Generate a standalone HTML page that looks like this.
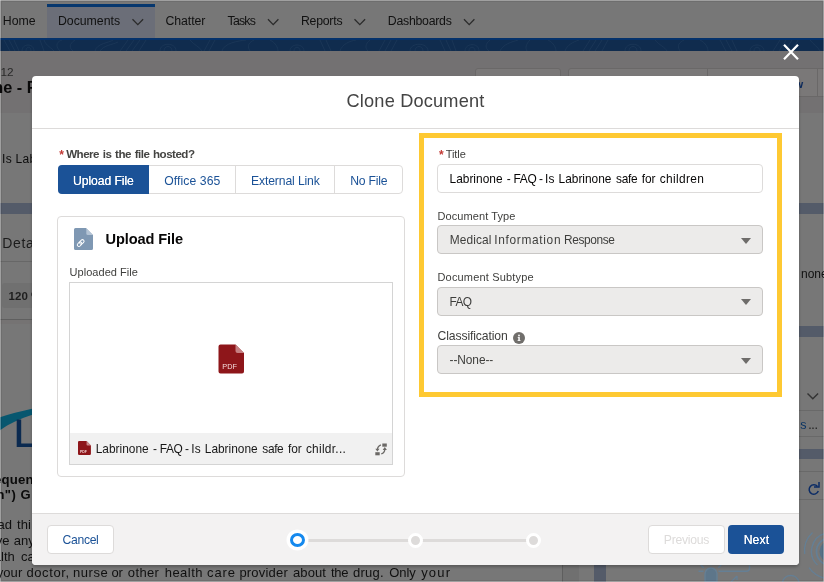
<!DOCTYPE html>
<html lang="en">
<head>
<meta charset="utf-8">
<title>Clone Document</title>
<style>
html,body{margin:0;padding:0;}
body{width:824px;height:582px;overflow:hidden;position:relative;background:#777777;font-family:"Liberation Sans",sans-serif;}
.a{position:absolute;box-sizing:border-box;}
.t{position:absolute;white-space:pre;font-family:"Liberation Sans",sans-serif;}
#bg,#content{will-change:transform;}
#bg{left:0;top:0;width:824px;height:582px;overflow:hidden;}
#modal{left:32px;top:76px;width:767px;height:489px;background:#fff;border-radius:4px;box-shadow:0 2px 3px rgba(0,0,0,.25);overflow:hidden;}
.sel{background:#ecebea;border:1px solid #c9c7c5;border-radius:4px;left:437px;width:326px;height:29px;}
.arr{width:0;height:0;border-left:5.500px solid transparent;border-right:5.500px solid transparent;border-top:6.500px solid #6e6c6a;left:741px;}
.btn{border:1px solid #dddbda;border-radius:4px;background:#fff;}
</style>
</head>
<body>
<!-- ================= dimmed page behind the modal ================= -->
<div id="bg" class="a">
  <!-- nav bar -->
  <div class="a" style="left:0;top:0;width:824px;height:38px;background:#777777;"></div>
    <div class="a" style="left:46.500px;top:4px;width:108px;height:34px;background:#6b6e78;border-top:3px solid #06376e;"></div>
  <!-- nav chevrons -->
  <svg class="a" style="left:0;top:0" width="824" height="38" viewBox="0 0 824 38" fill="none" stroke="#2b2b2b" stroke-width="1.3">
    <path d="M132.500 19.300l5.300 5.300 5.300-5.300"/><path d="M268 19.300l5.200 5.300 5.200-5.300"/><path d="M354.500 19.300l5.300 5.300 5.300-5.300"/><path d="M464 19.300l5.200 5.300 5.200-5.300"/>
  </svg>
  <!-- blue band -->
  <div class="a" style="left:0;top:37.500px;width:824px;height:13.500px;background:#102c4e;"></div>
  <div class="a" style="left:0;top:37.500px;width:824px;height:2.500px;background:#05326b;"></div>
  <svg class="a" style="left:0;top:40px" width="824" height="11" viewBox="0 0 824 11" fill="none" stroke="#2c4766" stroke-width="0.700" opacity="0.500">
    <path d="M4 0l6 11M9 0l6 11M14 0l5 11M22 11c0-8 12-8 12 0M26 11c0-5 5-5 5 0M40 0l4 11M44 0c2 6 8 8 10 11M60 11c-6-6-2-10 2-11M75 0c-6 4-6 8-2 11M95 11c2-8 14-8 18-11M100 11c4-6 12-6 18-9M128 0l-8 11M134 0l-8 11M140 0l-8 11M146 0l-7 11M160 11c0-9 16-9 16 0M164 11c0-6 8-6 8 0M190 0c4 5 10 7 12 11M210 0l-6 11M215 0l-6 11M222 11c2-8 16-10 24-11M250 11c-4-6 0-9 4-11M270 0c6 3 8 8 8 11M290 11c0-8 14-8 14 0M294 11c0-5 6-5 6 0M320 0l5 11M326 0l5 11M340 11c2-7 10-10 16-11M370 0c-5 4-5 8-2 11M385 0l-6 11M391 0l-6 11M397 0l-6 11M410 11c0-9 18-9 18 0M415 11c0-6 8-6 8 0M440 0l5 11M446 0l5 11M452 0l4 11M465 11c0-8 14-9 14 0M469 11c0-5 6-5 6 0M490 0c-5 4-5 8-1 11M500 11c3-7 12-9 18-11M530 0c-4 4-5 8-3 11M548 0c6 3 8 8 8 11M565 11c2-6 8-9 14-11M590 0l-7 11M596 0l-7 11M602 0l-7 11M608 0l-6 11M625 11c0-9 16-9 16 0M629 11c0-6 8-6 8 0M655 0c4 5 10 7 12 11M680 11c-4-6 0-9 4-11M700 0c6 3 8 8 8 11M720 0l6 11M726 0l6 11M732 0l5 11M750 11c0-8 14-8 14 0M754 11c0-5 6-5 6 0M780 0l-7 11M786 0l-7 11M792 0l-7 11M798 0l-6 11M810 0c3 4 8 7 10 11"/>
  </svg>
  <!-- record header -->
  <div class="a" style="left:0;top:51px;width:824px;height:62px;background:#737172;"></div>
  <div class="a" style="left:475px;top:68px;width:86px;height:29px;background:#7a7878;border:1px solid #6a6868;border-radius:3px;"></div>
  <div class="a" style="left:568px;top:68px;width:260px;height:29px;background:#7a7878;border:1px solid #6a6868;border-radius:3px;"></div>
  <div class="a" style="left:707px;top:68px;width:1px;height:29px;background:#6a6868;"></div>
  <div class="a" style="left:817px;top:68px;width:1px;height:29px;background:#6a6868;"></div>
  <!-- blue-gray separator bands -->
  <div class="a" style="left:0;top:203px;width:824px;height:11px;background:#545b69;"></div>
  <div class="a" style="left:799px;top:326px;width:25px;height:11px;background:#545b69;"></div>
  <div class="a" style="left:799px;top:449px;width:25px;height:10px;background:#545b69;"></div>
  <!-- left column details -->
  <div class="a" style="left:0;top:261px;width:40px;height:1px;background:#676767;"></div>
  <div class="a" style="left:1.500px;top:283px;width:40px;height:25px;background:#707070;border-radius:3px;"></div>
  <div class="a" style="left:0;top:319px;width:40px;height:1px;background:#5f5f5f;"></div>
  <div class="a" style="left:0;top:320px;width:40px;height:4px;background:#757373;"></div>
  <svg class="a" style="left:0;top:400px" width="40" height="60" viewBox="0 400 40 60" fill="none">
    <path d="M0 430.300C9 423.800 20 418.600 33 414.600V408.400C20 411.200 9 414.200 0 417.300Z" fill="#07576f"/>
    <path d="M16.700 419.500h4.500v24h12v3.400h-16.500z" fill="#0b2a50"/>
  </svg>
  <!-- right column details -->
  <div class="a" style="left:799px;top:410px;width:25px;height:1px;background:#696969;"></div>
  <div class="a" style="left:799px;top:436px;width:25px;height:1px;background:#696969;"></div>
  <div class="a" style="left:799px;top:471px;width:25px;height:1px;background:#696969;"></div>
  <div class="a" style="left:799px;top:499px;width:25px;height:1px;background:#696969;"></div>
  <svg class="a" style="left:799px;top:385px" width="25" height="120" viewBox="799 385 25 120" fill="none">
    <path d="M807.500 393.500l5.300 5.300 5.300-5.300" stroke="#333" stroke-width="1.400"/>
    <path d="M817.500 486.500a4.700 4.700 0 1 0 0.800 4.500" stroke="#0c2c66" stroke-width="1.500"/>
    <path d="M819 482v5h-5" stroke="#0c2c66" stroke-width="1.500"/>
  </svg>
  <!-- bottom strip -->
  <div class="a" style="left:562px;top:560px;width:17px;height:22px;background:#707070;border-left:1px solid #5e5e5e;"></div>
  <div class="a" style="left:593.500px;top:560px;width:12px;height:22px;background:#545b69;"></div>
  <svg class="a" style="left:640px;top:500px" width="184" height="82" viewBox="640 500 184 82" fill="none" stroke="#62819a" stroke-width="1.400" opacity="0.850">
    <circle cx="830" cy="551.500" r="10.500" fill="#50718a" stroke="none"/>
    <circle cx="830" cy="551.500" r="13.500" stroke-width="1.800"/>
    <path d="M826 533.300A18.500 18.500 0 0 0 817.500 565"/>
    <path d="M812.500 532.500A25.500 25.500 0 0 0 804.700 554" stroke-width="1.300"/>
    <path d="M809 567.600A27 27 0 0 0 824 578" stroke-width="1.300"/>
    <path d="M705 582v-8a6 6 0 0 1 12 0v8z" fill="#59768d"/>
    <path d="M700.500 564.500l3.200 3.200M721.500 564.500l-3.200 3.200M711 562v3.500"/>
    <path d="M698.500 571.300h5M718.500 571.300h28a3 3 0 0 0 3-3v-3"/>
    <path d="M731 582l6-6M737 576v4"/>
    <path d="M782.500 582a8.500 8.500 0 0 1 16.500 0"/>
  </svg>
  <!-- edge artefacts -->
  <div class="a" style="left:1px;top:1px;width:822px;height:580px;border:1px solid rgba(0,0,0,.07);"></div>
  <div class="a" style="left:0;top:0;width:1px;height:582px;background:rgba(255,255,255,.3);"></div>
  <div class="a" style="left:823px;top:0;width:1px;height:582px;background:rgba(255,255,255,.3);"></div>
  <div class="a" style="left:0;top:0;width:824px;height:1px;background:rgba(255,255,255,.3);"></div>
  <div class="a" style="left:0;top:581px;width:824px;height:1px;background:rgba(255,255,255,.3);"></div>
<span class="t" style="left:2.80px;top:14.00px;font-size:12.3px;line-height:15px;font-weight:400;color:#111111;">Home</span>
<span class="t" style="left:58.00px;top:14.00px;font-size:12.3px;line-height:15px;font-weight:400;color:#111111;letter-spacing:-0.021px;">Documents</span>
<span class="t" style="left:165.40px;top:14.00px;font-size:12.3px;line-height:15px;font-weight:400;color:#111111;letter-spacing:-0.046px;">Chatter</span>
<span class="t" style="left:227.50px;top:14.00px;font-size:12.3px;line-height:15px;font-weight:400;color:#111111;letter-spacing:-0.766px;">Tasks</span>
<span class="t" style="left:300.90px;top:14.00px;font-size:12.3px;line-height:15px;font-weight:400;color:#111111;letter-spacing:-0.237px;">Reports</span>
<span class="t" style="left:387.80px;top:14.00px;font-size:12.3px;line-height:15px;font-weight:400;color:#111111;letter-spacing:-0.251px;">Dashboards</span>
<span class="t" style="left:0.40px;top:65.00px;font-size:11.8px;line-height:14px;font-weight:400;color:#2a2a2a;">12</span>
<span class="t" style="left:-6.70px;top:77.00px;font-size:16.3px;line-height:20px;font-weight:700;color:#0a0a0a;">ne - F</span>
<span class="t" style="left:2.00px;top:152.00px;font-size:12px;line-height:14px;font-weight:400;color:#0c0c0c;letter-spacing:0.3px;">Is Lab</span>
<span class="t" style="left:2.20px;top:235.00px;font-size:14px;line-height:17px;font-weight:400;color:#1c1c1c;letter-spacing:0.7px;">Deta</span>
<span class="t" style="left:8.60px;top:289.00px;font-size:11.5px;line-height:14px;font-weight:700;color:#1e1e1e;">120 %</span>
<span class="t" style="left:-6.00px;top:471.50px;font-size:13.2px;line-height:16px;font-weight:700;color:#0a0a0a;letter-spacing:0.2px;">equen</span>
<span class="t" style="left:-3.60px;top:487.00px;font-size:13px;line-height:16px;font-weight:700;color:#0a0a0a;letter-spacing:0.5px;">n") G</span>
<span class="t" style="left:-2.60px;top:517.00px;font-size:13px;line-height:16px;font-weight:400;color:#101010;word-spacing:1.6px;">ad thi</span>
<span class="t" style="left:-4.20px;top:533.00px;font-size:13px;line-height:16px;font-weight:400;color:#101010;word-spacing:0.6px;">ve any</span>
<span class="t" style="left:-6.20px;top:549.00px;font-size:13px;line-height:16px;font-weight:400;color:#101010;word-spacing:2.7px;">alth ca</span>
<span class="t" style="left:-3.30px;top:564.50px;font-size:13px;line-height:16px;font-weight:400;color:#101010;letter-spacing:0.080px;">your </span>
<span class="t" style="left:26.50px;top:564.50px;font-size:13px;line-height:16px;font-weight:400;color:#101010;letter-spacing:0.581px;">doctor, </span>
<span class="t" style="left:73.10px;top:564.50px;font-size:13px;line-height:16px;font-weight:400;color:#101010;letter-spacing:0.528px;">nurse </span>
<span class="t" style="left:111.58px;top:564.50px;font-size:13px;line-height:16px;font-weight:400;color:#101010;letter-spacing:-0.390px;">or </span>
<span class="t" style="left:127.80px;top:564.50px;font-size:13px;line-height:16px;font-weight:400;color:#101010;letter-spacing:0.375px;">other </span>
<span class="t" style="left:164.70px;top:564.50px;font-size:13px;line-height:16px;font-weight:400;color:#101010;letter-spacing:0.482px;">health </span>
<span class="t" style="left:207.00px;top:564.50px;font-size:13px;line-height:16px;font-weight:400;color:#101010;letter-spacing:0.880px;">care </span>
<span class="t" style="left:239.40px;top:564.50px;font-size:13px;line-height:16px;font-weight:400;color:#101010;letter-spacing:0.195px;">provider </span>
<span class="t" style="left:293.10px;top:564.50px;font-size:13px;line-height:16px;font-weight:400;color:#101010;letter-spacing:0.045px;">about </span>
<span class="t" style="left:331.00px;top:564.50px;font-size:13px;line-height:16px;font-weight:400;color:#101010;letter-spacing:-0.271px;">the </span>
<span class="t" style="left:353.00px;top:564.50px;font-size:13px;line-height:16px;font-weight:400;color:#101010;letter-spacing:0.245px;">drug. </span>
<span class="t" style="left:389.30px;top:564.50px;font-size:13px;line-height:16px;font-weight:400;color:#101010;letter-spacing:-0.110px;">Only </span>
<span class="t" style="left:421.17px;top:564.50px;font-size:13px;line-height:16px;font-weight:400;color:#101010;letter-spacing:1.170px;">your</span>
<span class="t" style="left:801.00px;top:267.00px;font-size:12px;line-height:14px;font-weight:400;color:#111;">none</span>
<span class="t" style="left:800.30px;top:418.00px;font-size:12.5px;line-height:15px;font-weight:400;color:#0b3463;">s</span>
<span class="t" style="left:808.30px;top:418.00px;font-size:12.5px;line-height:15px;font-weight:400;color:#1c1c1c;letter-spacing:-0.4px;">...</span>
<span class="t" style="left:794.30px;top:77.00px;font-size:11.5px;line-height:14px;font-weight:700;color:#0c2a5c;">w</span>
</div>

<!-- close button -->
<svg class="a" style="left:780px;top:41px" width="22" height="22" viewBox="0 0 22 22" fill="none" stroke="#ffffff" stroke-width="2.200">
  <path d="M4 3.700l14 14.600M18 3.700l-14 14.600"/>
</svg>

<!-- ================= modal ================= -->
<div id="modal" class="a"></div>
<div id="content" class="a" style="left:0;top:0;width:824px;height:582px;">
  <!-- header / footer -->
  <div class="a" style="left:32px;top:128px;width:767px;height:1px;background:#dddbda;"></div>
  <div class="a" style="left:32px;top:513px;width:767px;height:52px;background:#f3f2f2;border-top:1px solid #dddbda;border-radius:0 0 4px 4px;"></div>

  <!-- radio button group -->
  <div class="a btn" style="left:58px;top:165px;width:345px;height:29px;"></div>
  <div class="a" style="left:58px;top:165px;width:91px;height:29px;background:#1b5297;border-radius:4px 0 0 4px;"></div>
  <div class="a" style="left:235px;top:165px;width:1px;height:29px;background:#dddbda;"></div>
  <div class="a" style="left:334px;top:165px;width:1px;height:29px;background:#dddbda;"></div>

  <!-- upload card -->
  <div class="a" style="left:57px;top:216px;width:348px;height:261px;border:1px solid #dddbda;border-radius:4px;background:#fff;"></div>
  <svg class="a" style="left:74px;top:228px" width="19" height="22" viewBox="0 0 19 22">
    <path d="M1.500 0H12l7 7v13.500A1.500 1.500 0 0 1 17.500 22h-16A1.500 1.500 0 0 1 0 20.500v-19A1.500 1.500 0 0 1 1.500 0z" fill="#7f98b3"/>
    <path d="M12.300 0.300l6.500 6.700h-5A1.500 1.500 0 0 1 12.300 5.500z" fill="#b4c4d5"/>
    <g transform="rotate(-45 6.700 15.100)" fill="none" stroke="#fff" stroke-width="1"><rect x="2.600" y="13.500" width="5" height="3.200" rx="1.600"/><rect x="5.800" y="13.500" width="5" height="3.200" rx="1.600"/></g>
  </svg>
  <div class="a" style="left:69px;top:282px;width:324px;height:183px;border:1px solid #d4d4d4;background:#fff;"></div>
  <div class="a" style="left:70px;top:433px;width:322px;height:31px;background:#f1f1f1;"></div>
  <!-- big pdf icon -->
  <svg class="a" style="left:218px;top:344px" width="26" height="30" viewBox="0 0 26 30">
    <path d="M2.500 0.500H17.500L26 9v18.500a2 2 0 0 1-2 2H2.500a2 2 0 0 1-2-2v-25a2 2 0 0 1 2-2z" fill="#8e161a"/>
    <path d="M17.500 0.500L26 9h-6.500a2 2 0 0 1-2-2z" fill="#c58082"/>
    <text x="4.300" y="25" font-family="Liberation Sans, sans-serif" font-size="7.300" fill="#f3dada">PDF</text>
  </svg>
  <!-- small pdf icon -->
  <svg class="a" style="left:78px;top:441px" width="13.300" height="14" viewBox="0 0 14 14" preserveAspectRatio="none">
    <path d="M1.200 0H9l4.600 4.600V12.800A1.200 1.200 0 0 1 12.400 14H1.200A1.200 1.200 0 0 1 0 12.800V1.200A1.200 1.200 0 0 1 1.200 0z" fill="#8e161a"/>
    <path d="M9 0l4.600 4.600H10A1 1 0 0 1 9 3.600z" fill="#c98a8c"/>
    <text x="2.200" y="11.600" font-family="Liberation Sans, sans-serif" font-size="3.600" font-weight="700" fill="#f0d0d0">PDF</text>
  </svg>
  <!-- replace icon -->
  <svg class="a" style="left:374px;top:443px" width="14" height="13" viewBox="0 0 14 13" fill="none" stroke="#6b6966" stroke-width="1.300">
    <path d="M6.900 1.800C4.600 2.700 3.400 4.600 3.400 6.800"/>
    <path d="M7.300 10.900C9.600 10 10.800 8.100 10.800 5.900"/>
    <rect x="8.300" y="0.500" width="4.500" height="3.200" fill="#6b6966" stroke="none"/>
    <rect x="1.300" y="9.200" width="4.400" height="3.100" fill="#6b6966" stroke="none"/>
    <path d="M1.300 5.700h4.200l-2.100 2.900z" fill="#6b6966" stroke="none"/>
    <path d="M8.700 7h4.200l-2.100-2.900z" fill="#6b6966" stroke="none"/>
  </svg>

  <!-- yellow highlight -->
  <div class="a" style="left:419px;top:133px;width:363px;height:264px;border:5px solid #fec932;"></div>
  <!-- title input -->
  <div class="a" style="left:437px;top:164px;width:326px;height:29px;border:1px solid #dddbda;border-radius:4px;background:#fff;"></div>
  <!-- selects -->
  <div class="a sel" style="top:225px;"></div><div class="a arr" style="top:238px;"></div>
  <div class="a sel" style="top:287px;"></div><div class="a arr" style="top:299px;"></div>
  <div class="a sel" style="top:345px;"></div><div class="a arr" style="top:358px;"></div>
  <!-- info icon -->
  <svg class="a" style="left:513px;top:332px" width="12" height="12" viewBox="0 0 12 12">
    <circle cx="6" cy="6" r="6" fill="#706e6b"/>
    <rect x="5.300" y="5.100" width="1.500" height="3.600" fill="#fff"/><rect x="4.700" y="5.100" width="1.400" height="0.800" fill="#fff"/><rect x="4.600" y="8.100" width="2.900" height="0.800" fill="#fff"/>
    <circle cx="6" cy="3.500" r="0.900" fill="#fff"/>
  </svg>

  <!-- footer buttons -->
  <div class="a btn" style="left:47px;top:525px;width:67px;height:29px;"></div>
  <div class="a btn" style="left:648px;top:525px;width:77px;height:29px;"></div>
  <div class="a" style="left:728px;top:525px;width:56px;height:29px;background:#1b5297;border-radius:4px;"></div>

  <!-- progress indicator -->
  <div class="a" style="left:297px;top:539px;width:237px;height:3px;background:#dddbda;"></div>
  <div class="a" style="left:290px;top:533px;width:15px;height:14px;border-radius:50%;background:#fff;border:3px solid #1589ee;box-shadow:0 0 0 3.500px #fff;"></div>
  <div class="a" style="left:408px;top:532.500px;width:15px;height:15px;border-radius:50%;background:#dddbda;border:3px solid #fff;"></div>
  <div class="a" style="left:526px;top:532.500px;width:15px;height:15px;border-radius:50%;background:#dddbda;border:3px solid #fff;"></div>

<span class="t" style="left:346.50px;top:90.20px;font-size:18.2px;line-height:22px;font-weight:400;color:#444444;letter-spacing:0.181px;">Clone Document</span>
<span class="t" style="left:59.30px;top:148.30px;font-size:12px;line-height:14px;font-weight:700;color:#c23934;">*</span>
<span class="t" style="left:66.20px;top:147.00px;font-size:11.6px;line-height:14px;font-weight:700;color:#444442;letter-spacing:-0.516px;word-spacing:1px;">Where is the file hosted?</span>
<span class="t" style="left:73.00px;top:174.00px;font-size:12.2px;line-height:15px;font-weight:400;color:#ffffff;letter-spacing:-0.086px;text-shadow:0 0 0.4px #fff;">Upload File</span>
<span class="t" style="left:164.20px;top:174.00px;font-size:12.2px;line-height:15px;font-weight:400;color:#1b5297;letter-spacing:0.097px;">Office 365</span>
<span class="t" style="left:251.00px;top:174.00px;font-size:12.2px;line-height:15px;font-weight:400;color:#1b5297;letter-spacing:-0.135px;">External Link</span>
<span class="t" style="left:350.20px;top:174.00px;font-size:12.2px;line-height:15px;font-weight:400;color:#1b5297;letter-spacing:-0.229px;">No File</span>
<span class="t" style="left:105.50px;top:229.70px;font-size:14.6px;line-height:18px;font-weight:700;color:#080707;letter-spacing:-0.104px;">Upload File</span>
<span class="t" style="left:69.50px;top:266.20px;font-size:11px;line-height:13px;font-weight:400;color:#3e3e3c;letter-spacing:0.048px;">Uploaded File</span>
<span class="t" style="left:95.70px;top:442.00px;font-size:11.9px;line-height:14px;font-weight:400;color:#181818;letter-spacing:0.015px;">Labrinone </span>
<span class="t" style="left:153.00px;top:442.00px;font-size:11.9px;line-height:14px;font-weight:400;color:#181818;letter-spacing:0.300px;">- </span>
<span class="t" style="left:159.79px;top:442.00px;font-size:11.9px;line-height:14px;font-weight:400;color:#181818;letter-spacing:-0.357px;">FAQ </span>
<span class="t" style="left:185.10px;top:442.00px;font-size:11.9px;line-height:14px;font-weight:400;color:#181818;letter-spacing:-0.200px;">- </span>
<span class="t" style="left:191.20px;top:442.00px;font-size:11.9px;line-height:14px;font-weight:400;color:#181818;letter-spacing:0.196px;">Is </span>
<span class="t" style="left:204.80px;top:442.00px;font-size:11.9px;line-height:14px;font-weight:400;color:#181818;letter-spacing:-0.010px;">Labrinone </span>
<span class="t" style="left:262.30px;top:442.00px;font-size:11.9px;line-height:14px;font-weight:400;color:#181818;letter-spacing:-0.357px;">safe </span>
<span class="t" style="left:288.00px;top:442.00px;font-size:11.9px;line-height:14px;font-weight:400;color:#181818;letter-spacing:-0.108px;">for </span>
<span class="t" style="left:305.90px;top:442.00px;font-size:11.9px;line-height:14px;font-weight:400;color:#181818;letter-spacing:0.279px;">childr...</span>
<span class="t" style="left:439.00px;top:148.30px;font-size:12px;line-height:14px;font-weight:700;color:#c23934;">*</span>
<span class="t" style="left:445.70px;top:148.00px;font-size:11px;line-height:13px;font-weight:400;color:#3e3e3c;letter-spacing:-0.075px;">Title</span>
<span class="t" style="left:449.50px;top:172.00px;font-size:11.9px;line-height:14px;font-weight:400;color:#080707;letter-spacing:0.015px;">Labrinone </span>
<span class="t" style="left:506.80px;top:172.00px;font-size:11.9px;line-height:14px;font-weight:400;color:#080707;letter-spacing:0.300px;">- </span>
<span class="t" style="left:513.59px;top:172.00px;font-size:11.9px;line-height:14px;font-weight:400;color:#080707;letter-spacing:-0.357px;">FAQ </span>
<span class="t" style="left:538.90px;top:172.00px;font-size:11.9px;line-height:14px;font-weight:400;color:#080707;letter-spacing:-0.200px;">- </span>
<span class="t" style="left:545.00px;top:172.00px;font-size:11.9px;line-height:14px;font-weight:400;color:#080707;letter-spacing:0.196px;">Is </span>
<span class="t" style="left:558.60px;top:172.00px;font-size:11.9px;line-height:14px;font-weight:400;color:#080707;letter-spacing:-0.010px;">Labrinone </span>
<span class="t" style="left:616.10px;top:172.00px;font-size:11.9px;line-height:14px;font-weight:400;color:#080707;letter-spacing:-0.357px;">safe </span>
<span class="t" style="left:641.80px;top:172.00px;font-size:11.9px;line-height:14px;font-weight:400;color:#080707;letter-spacing:-0.108px;">for </span>
<span class="t" style="left:659.70px;top:172.00px;font-size:11.9px;line-height:14px;font-weight:400;color:#080707;letter-spacing:0.353px;">children</span>
<span class="t" style="left:437.50px;top:210.00px;font-size:11px;line-height:13px;font-weight:400;color:#3e3e3c;letter-spacing:0.089px;">Document Type</span>
<span class="t" style="left:449.70px;top:233.20px;font-size:11.9px;line-height:14px;font-weight:400;color:#3e3e3c;letter-spacing:0.111px;">Medical </span>
<span class="t" style="left:494.30px;top:233.20px;font-size:11.9px;line-height:14px;font-weight:400;color:#3e3e3c;letter-spacing:0.673px;">Information </span>
<span class="t" style="left:563.93px;top:233.20px;font-size:11.9px;line-height:14px;font-weight:400;color:#3e3e3c;letter-spacing:-0.357px;">Response</span>
<span class="t" style="left:437.50px;top:271.00px;font-size:11px;line-height:13px;font-weight:400;color:#3e3e3c;letter-spacing:0.165px;">Document Subtype</span>
<span class="t" style="left:449.50px;top:295.20px;font-size:11.9px;line-height:14px;font-weight:400;color:#3e3e3c;letter-spacing:-0.596px;">FAQ</span>
<span class="t" style="left:437.50px;top:329.00px;font-size:12.2px;line-height:15px;font-weight:400;color:#3e3e3c;letter-spacing:-0.114px;">Classification</span>
<span class="t" style="left:449.50px;top:353.20px;font-size:11.9px;line-height:14px;font-weight:400;color:#3e3e3c;letter-spacing:-0.071px;">--None--</span>
<span class="t" style="left:62.50px;top:533.00px;font-size:12.2px;line-height:15px;font-weight:400;color:#1b5297;letter-spacing:-0.323px;">Cancel</span>
<span class="t" style="left:663.80px;top:533.00px;font-size:12.2px;line-height:15px;font-weight:400;color:#dddbda;letter-spacing:-0.277px;">Previous</span>
<span class="t" style="left:743.70px;top:533.00px;font-size:12.2px;line-height:15px;font-weight:400;color:#ffffff;letter-spacing:0.135px;text-shadow:0 0 0.4px #fff;">Next</span>
</div>
</body>
</html>
